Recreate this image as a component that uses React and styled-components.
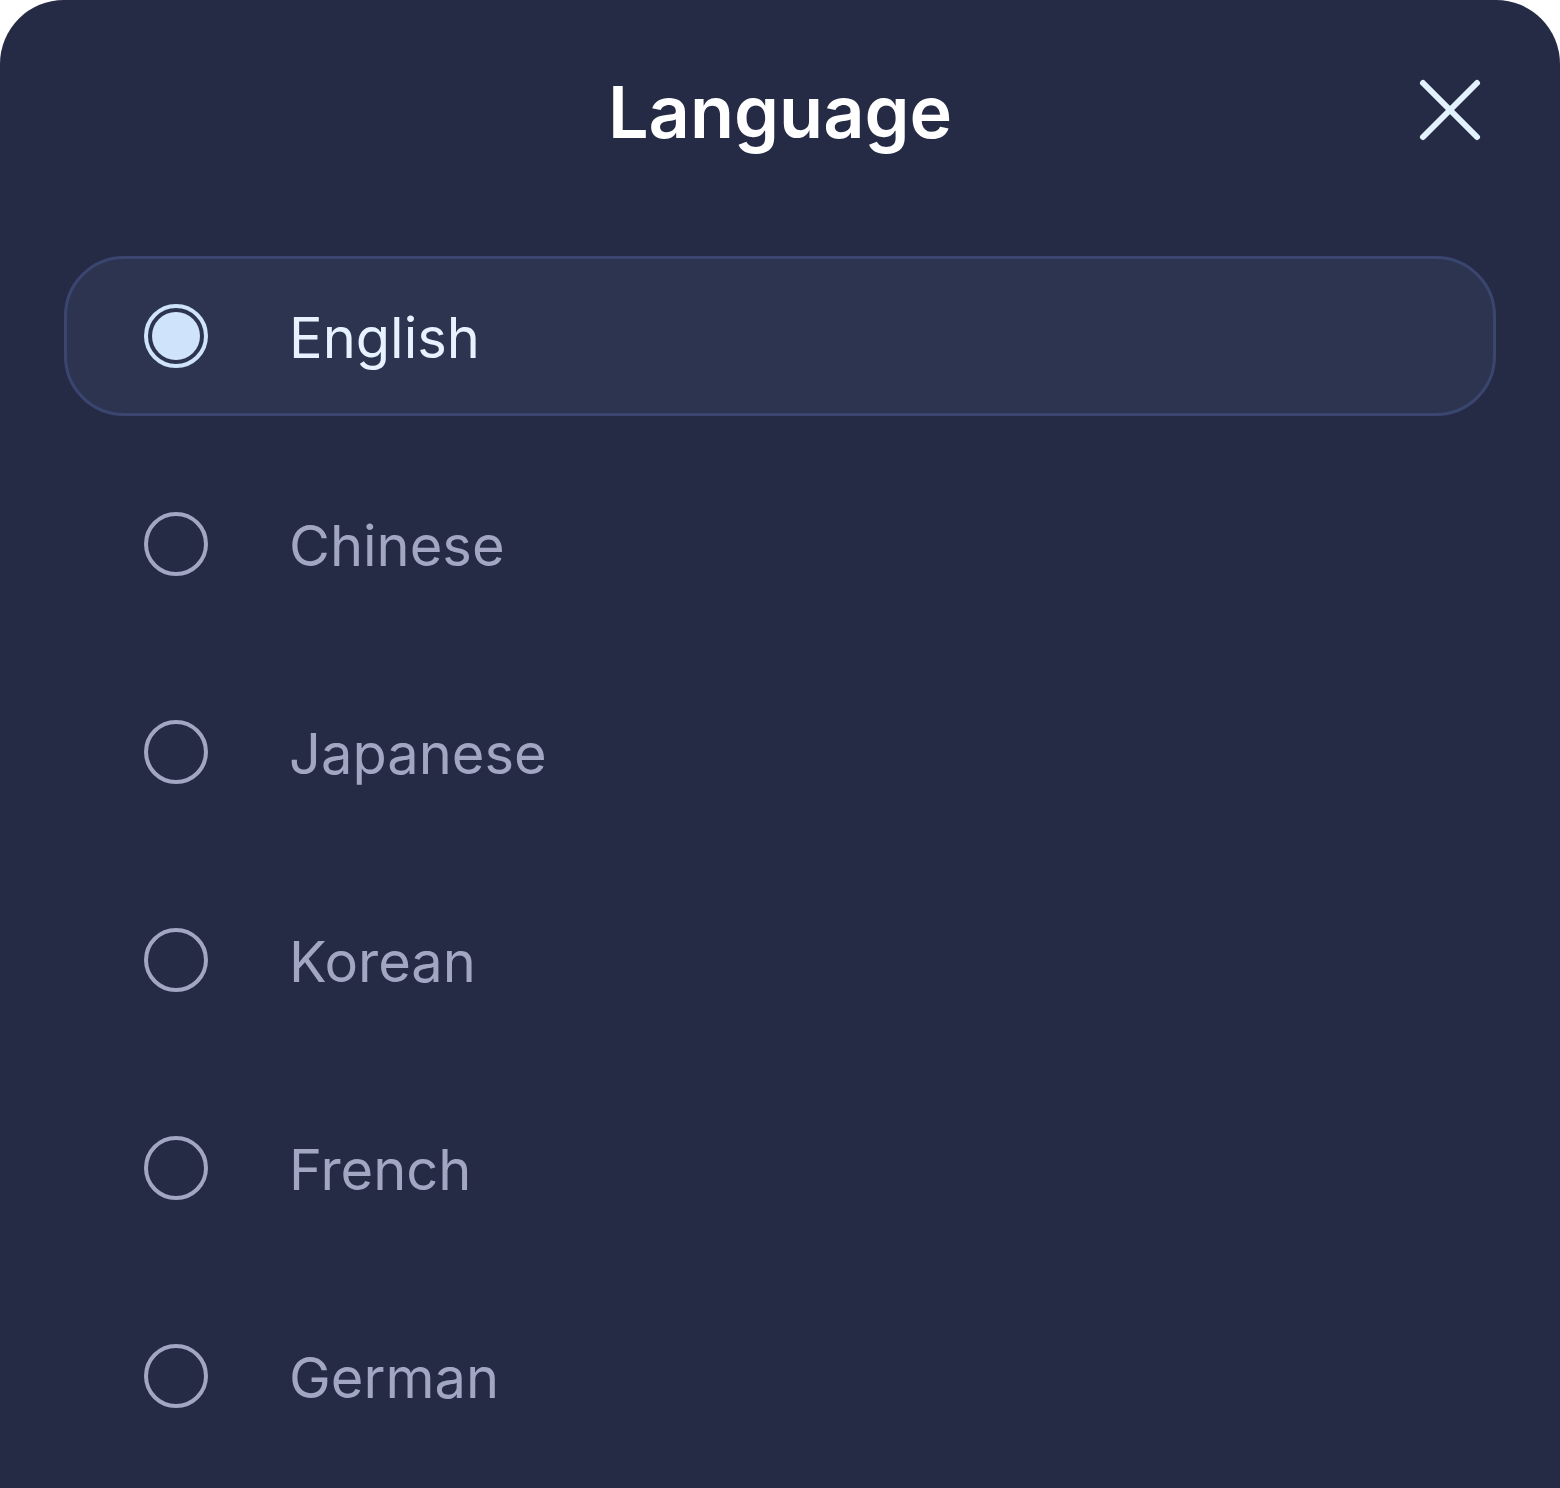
import React, { useState } from "react";
import styled, { createGlobalStyle } from "styled-components";

const Global = createGlobalStyle`
  html, body { margin: 0; padding: 0; background: #ffffff; }
  body { font-family: Inter, "Noto Sans", sans-serif; }
  * { box-sizing: border-box; }
`;

const Sheet = styled.div`
  width: 1560px;
  min-height: 1488px;
  background: #262b45;
  border-radius: 64px 64px 0 0;
  overflow: hidden;
`;

const Header = styled.div`
  position: relative;
  height: 220px;
  display: flex;
  align-items: center;
  justify-content: center;
`;

const Title = styled.h1`
  margin: 0;
  font-family: Inter, sans-serif;
  font-weight: 600;
  font-size: 72px;
  line-height: 1;
  color: #ffffff;
  letter-spacing: 0;
  transform: translateY(2px);
`;

const CloseButton = styled.button`
  position: absolute;
  right: 74px;
  top: 74px;
  width: 72px;
  height: 72px;
  padding: 0;
  border: 0;
  background: transparent;
  display: flex;
  align-items: center;
  justify-content: center;
  cursor: pointer;
`;

const List = styled.div`
  display: flex;
  flex-direction: column;
  gap: 48px;
  padding: 36px 64px 0;
`;

const Row = styled.div`
  height: 160px;
  display: flex;
  align-items: center;
  gap: 81px;
  padding-left: 77px;
  border-radius: 60px;
  border: 3px solid ${(p) => (p.$selected ? "#3a4670" : "transparent")};
  background: ${(p) => (p.$selected ? "#2d3450" : "transparent")};
  cursor: pointer;
`;

const Radio = styled.span`
  flex: none;
  width: 64px;
  height: 64px;
  border-radius: 50%;
  border: 4px solid ${(p) => (p.$selected ? "#cfe4fb" : "#a2a6c3")};
  display: flex;
  align-items: center;
  justify-content: center;
  &::after {
    content: "";
    display: ${(p) => (p.$selected ? "block" : "none")};
    width: 48px;
    height: 48px;
    border-radius: 50%;
    background: #cfe4fb;
  }
`;

const Label = styled.span`
  font-family: Inter, sans-serif;
  font-size: 56px;
  font-weight: 400;
  line-height: 1;
  color: ${(p) => (p.$selected ? "#e6f2ff" : "#a2a6c3")};
  transform: translateY(2px);
`;

const languages = ["English", "Chinese", "Japanese", "Korean", "French", "German"];

export default function App() {
  const [selected, setSelected] = useState("English");
  return (
    <>
      <Global />
      <Sheet>
        <Header>
          <Title>Language</Title>
          <CloseButton aria-label="Close">
            <svg width="72" height="72" viewBox="0 0 72 72" fill="none">
              <path
                d="M9 9 L63 63 M63 9 L9 63"
                stroke="#e3f2ff"
                strokeWidth="6"
                strokeLinecap="round"
              />
            </svg>
          </CloseButton>
        </Header>
        <List>
          {languages.map((lang) => (
            <Row
              key={lang}
              $selected={lang === selected}
              onClick={() => setSelected(lang)}
            >
              <Radio $selected={lang === selected} />
              <Label $selected={lang === selected}>{lang}</Label>
            </Row>
          ))}
        </List>
      </Sheet>
    </>
  );
}
